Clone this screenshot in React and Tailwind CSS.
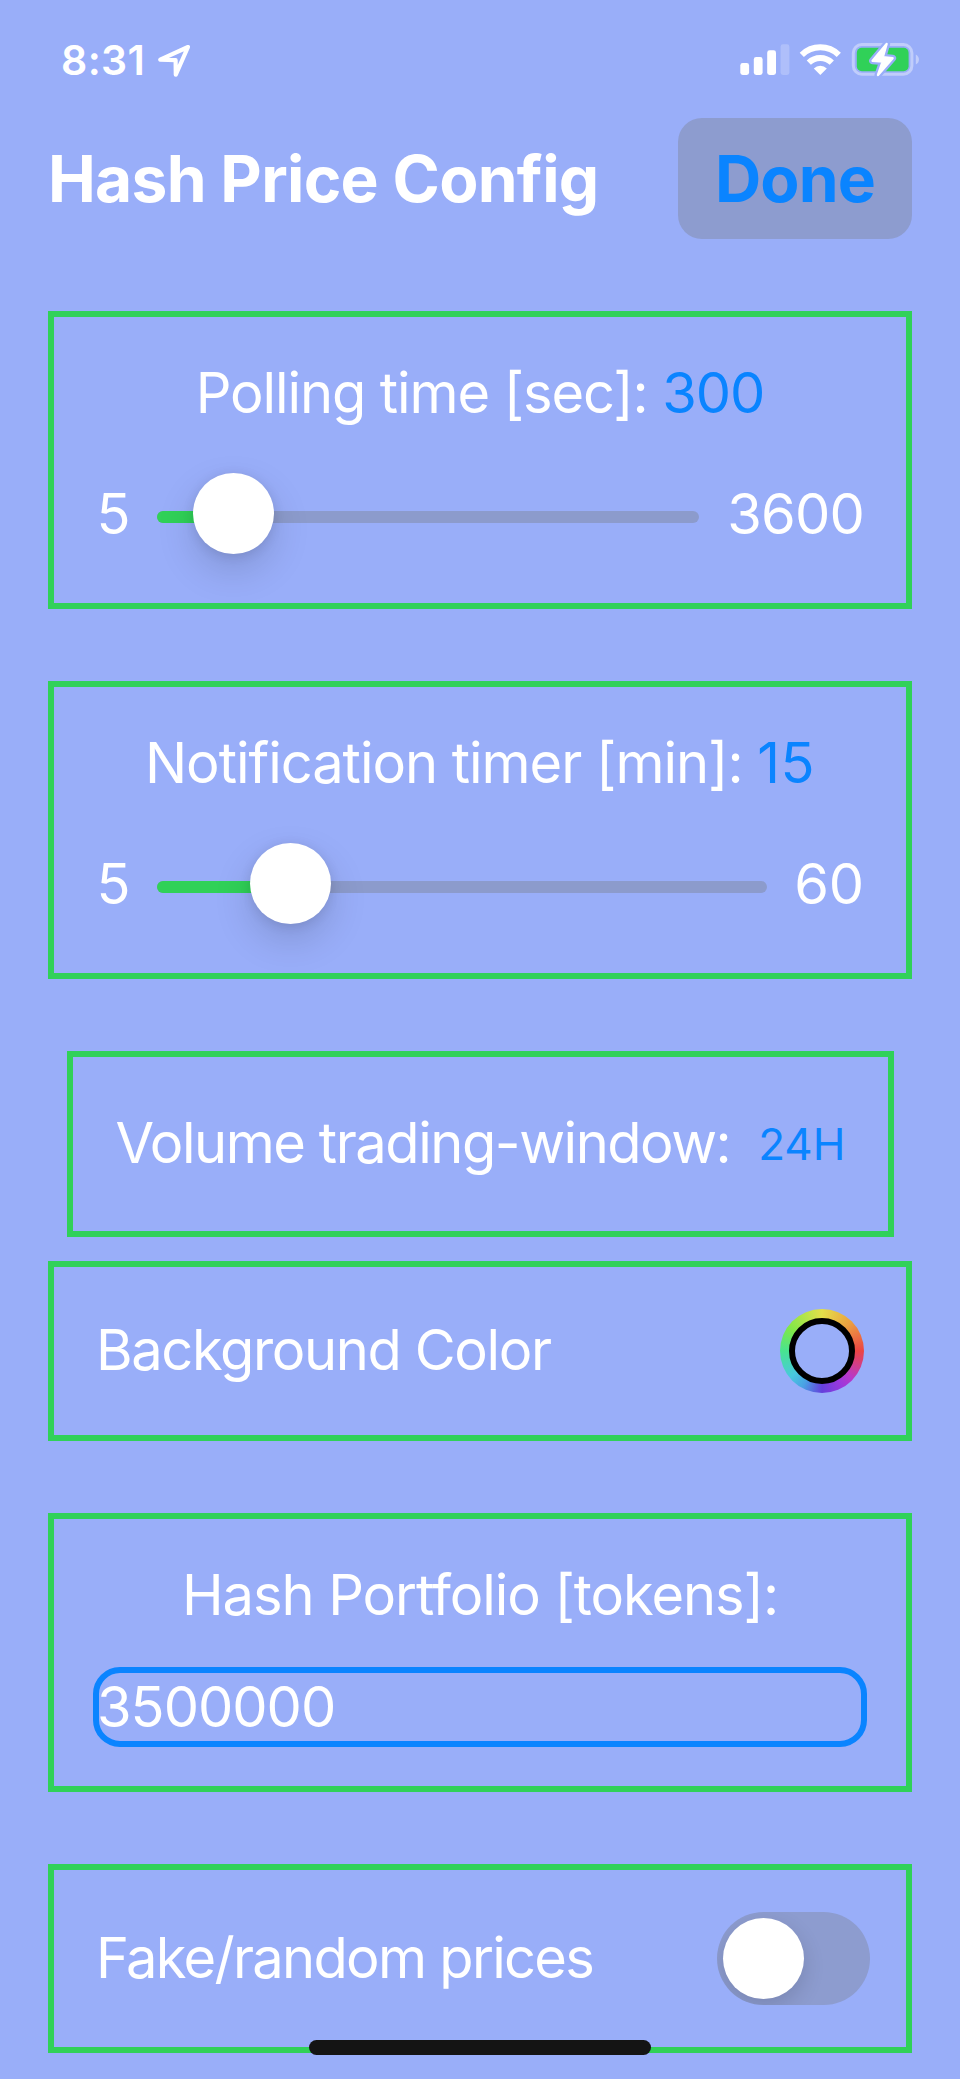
import React from "react";

const label = "whitespace-nowrap text-[56px] leading-[68px]";

function StatusIcons() {
  return (
    <svg width="180" height="36" viewBox="740 42 180 36" fill="none">
      <rect x="740.3" y="63" width="8.8" height="12" rx="2.4" fill="#fff" />
      <rect x="753.8" y="57" width="8.8" height="18" rx="2.4" fill="#fff" />
      <rect x="767.2" y="50.3" width="8.8" height="24.7" rx="2.4" fill="#fff" />
      <rect x="780.6" y="44.3" width="8.8" height="30.7" rx="2.4" fill="#fff" opacity="0.22" />
      <g stroke="#fff">
        <path d="M801.8 54.9 A26.5 26.5 0 0 1 838.8 54.9" strokeWidth="6" />
        <path d="M808.8 62.6 A16.5 16.5 0 0 1 831.8 62.6" strokeWidth="6" />
      </g>
      <path d="M820.3 75 L813.8 68.4 A9.5 9.5 0 0 1 826.8 68.4 Z" fill="#fff" />
      <rect x="853.3" y="44.5" width="58.6" height="29.8" rx="8.5" stroke="#fff" strokeOpacity="0.38" strokeWidth="3" />
      <rect x="856.8" y="47.8" width="51.8" height="23.4" rx="5" fill="#30d158" />
      <path d="M915.8 54.5 C920 56.5 920 62.5 915.8 64.5 Z" fill="#fff" fillOpacity="0.4" />
      <path
        d="M886.6 44 L872.6 60.8 L882.6 61.6 L878 75 L892.6 58.2 L882.8 57.2 Z"
        fill="#99aef9"
        stroke="#99aef9"
        strokeWidth="7"
        strokeLinejoin="round"
      />
      <path
        d="M886.6 44 L872.6 60.8 L882.6 61.6 L878 75 L892.6 58.2 L882.8 57.2 Z"
        fill="#fff"
        stroke="#fff"
        strokeWidth="2.4"
        strokeLinejoin="round"
      />
    </svg>
  );
}

function Slider({ thumb }) {
  return (
    <div className="relative mt-[6px] h-[12px] grow rounded-full bg-[#8c9bcc]">
      <div className="h-full rounded-full bg-[#30d158]" style={{ width: thumb + 40 }} />
      <div
        className="absolute top-[-38px] size-[81px] rounded-full bg-white shadow-[0_16px_38px_rgba(0,0,0,0.15),0_2px_12px_rgba(0,0,0,0.1)]"
        style={{ left: thumb }}
      />
    </div>
  );
}

function SliderCard({ title, titleClass, value, valueClass, min, max, maxClass, thumb }) {
  return (
    <section className="h-[298px] border-[6px] border-[#30d158] pt-[42px]">
      <div className={`${label} ${titleClass} text-center`}>
        {title} <span className={`text-[#0a84ff] ${valueClass}`}>{value}</span>
      </div>
      <div className="mt-[53px] flex items-center pr-[42px] pl-[42.5px]">
        <span className={`${label} w-[60.5px]`}>{min}</span>
        <Slider thumb={thumb} />
        <span className={`${label} ${maxClass} text-right`}>{max}</span>
      </div>
    </section>
  );
}

export default function App() {
  return (
    <div className="relative flex h-[2079px] w-[960px] flex-col overflow-hidden bg-[#99aef9] font-['Inter',sans-serif] text-white">
      <div className="flex h-[118px] items-start justify-between pr-[40px] pl-[61px] pt-[42px]">
        <div className="flex items-center">
          <span className="w-[95px] text-[41px] leading-[36px] font-semibold tracking-[0.4px]">8:31</span>
          <svg width="36" height="36" viewBox="156 42 36 36" fill="none" stroke="#fff" strokeWidth="4.2" strokeLinejoin="round">
            <path d="M188 47 L160.2 59.6 L175.6 60.2 L175.8 74.6 Z" />
          </svg>
        </div>
        <StatusIcons />
      </div>

      <header className="flex h-[121px] items-center justify-between px-[48px]">
        <h1 className="text-[64px] leading-[78px] font-bold tracking-[-0.69px] whitespace-nowrap">Hash Price Config</h1>
        <button className="h-[121px] w-[234px] rounded-[24px] bg-[#8d9ccf] text-[64px] leading-[78px] font-bold tracking-[-0.8px] text-[#0a84ff]">
          Done
        </button>
      </header>

      <main className="flex flex-col px-[48px] pt-[72px]">
        <SliderCard
          title="Polling time [sec]:"
          titleClass="tracking-[-1.1px]"
          value="300"
          valueClass=""
          min="5"
          max="3600"
          maxClass="w-[165px] tracking-[-0.8px]"
          thumb={36}
        />
        <div className="h-[72px]" />
        <SliderCard
          title="Notification timer [min]:"
          titleClass="tracking-[-1.03px]"
          value="15"
          valueClass="tracking-[0.5px]"
          min="5"
          max="60"
          maxClass="w-[97px] tracking-[-0.2px]"
          thumb={93}
        />

        <section className="mx-auto mt-[72px] flex h-[186px] w-[827px] items-center justify-between border-[6px] border-[#30d158] pr-[42px] pl-[43px]">
          <span className={`${label} pb-[2px] tracking-[-1.45px]`}>Volume trading-window:</span>
          <span className="text-[44px] leading-[54px] text-[#0a84ff]">24H</span>
        </section>

        <section className="mt-[24px] flex h-[180px] items-center justify-between border-[6px] border-[#30d158] px-[42px]">
          <span className={`${label} pb-[2px] tracking-[-1.37px]`}>Background Color</span>
          <span className="flex size-[84px] items-center justify-center rounded-full bg-[conic-gradient(#e4e04a,#eba040_45deg,#eb4444_90deg,#b838c8_132deg,#9c38dc_150deg,#6440dc_180deg,#4aa0e4_208deg,#48c8e0_230deg,#48e490_270deg,#80e848_305deg,#e4e04a)]">
            <span className="size-[66px] rounded-full border-[6px] border-black bg-[#99aef9]" />
          </span>
        </section>

        <section className="mt-[72px] h-[279px] border-[6px] border-[#30d158] px-[39px] pt-[42px]">
          <div className={`${label} text-center tracking-[-1.07px]`}>Hash Portfolio [tokens]:</div>
          <div className="mt-[38px] flex h-[80px] items-center rounded-[27px] border-[6px] border-[#0a84ff]">
            <span className={`${label} -ml-[2px] tracking-[-1px]`}>3500000</span>
          </div>
        </section>

        <section className="mt-[72px] flex h-[189px] items-center justify-between border-[6px] border-[#30d158] pr-[36px] pl-[42px]">
          <span className={`${label} pb-[2px] tracking-[-1.7px]`}>Fake/random prices</span>
          <span className="flex h-[93px] w-[153px] items-center overflow-hidden rounded-full bg-[#8d9ccf] p-[6px]">
            <span className="size-[81px] rounded-full bg-white shadow-[0_8px_22px_rgba(0,0,0,0.14)]" />
          </span>
        </section>
      </main>

      <div className="absolute top-[2040px] left-[309px] h-[15px] w-[342px] rounded-full bg-[#141414]" />
    </div>
  );
}
